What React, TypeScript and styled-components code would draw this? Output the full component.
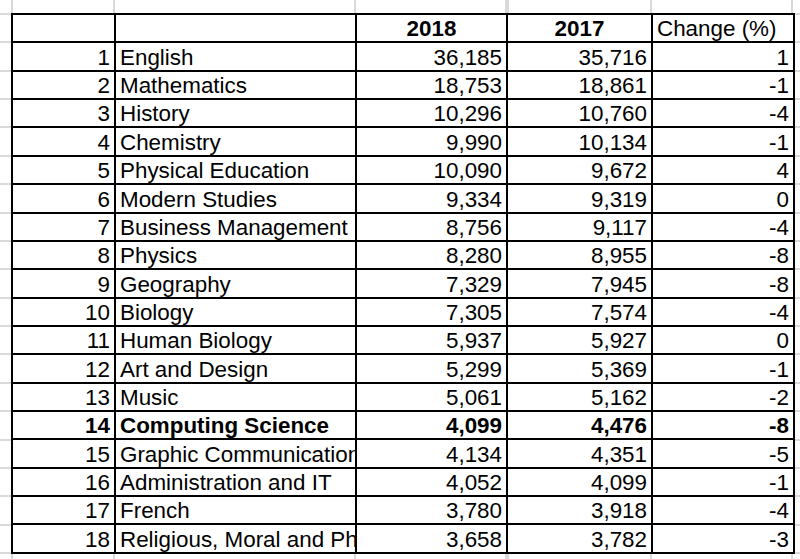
import styled, { createGlobalStyle } from "styled-components";

interface Subject {
  rank: number;
  name: string;
  y2018: string;
  y2017: string;
  change: string;
  highlight?: boolean;
}

const subjects: Subject[] = [
  { rank: 1, name: "English", y2018: "36,185", y2017: "35,716", change: "1" },
  { rank: 2, name: "Mathematics", y2018: "18,753", y2017: "18,861", change: "-1" },
  { rank: 3, name: "History", y2018: "10,296", y2017: "10,760", change: "-4" },
  { rank: 4, name: "Chemistry", y2018: "9,990", y2017: "10,134", change: "-1" },
  { rank: 5, name: "Physical Education", y2018: "10,090", y2017: "9,672", change: "4" },
  { rank: 6, name: "Modern Studies", y2018: "9,334", y2017: "9,319", change: "0" },
  { rank: 7, name: "Business Management", y2018: "8,756", y2017: "9,117", change: "-4" },
  { rank: 8, name: "Physics", y2018: "8,280", y2017: "8,955", change: "-8" },
  { rank: 9, name: "Geography", y2018: "7,329", y2017: "7,945", change: "-8" },
  { rank: 10, name: "Biology", y2018: "7,305", y2017: "7,574", change: "-4" },
  { rank: 11, name: "Human Biology", y2018: "5,937", y2017: "5,927", change: "0" },
  { rank: 12, name: "Art and Design", y2018: "5,299", y2017: "5,369", change: "-1" },
  { rank: 13, name: "Music", y2018: "5,061", y2017: "5,162", change: "-2" },
  { rank: 14, name: "Computing Science", y2018: "4,099", y2017: "4,476", change: "-8", highlight: true },
  { rank: 15, name: "Graphic Communication", y2018: "4,134", y2017: "4,351", change: "-5" },
  { rank: 16, name: "Administration and IT", y2018: "4,052", y2017: "4,099", change: "-1" },
  { rank: 17, name: "French", y2018: "3,780", y2017: "3,918", change: "-4" },
  { rank: 18, name: "Religious, Moral and Philosophical Studies", y2018: "3,658", y2017: "3,782", change: "-3" },
];

const GlobalStyle = createGlobalStyle`
  html, body {
    margin: 0;
    padding: 0;
    background: #fff;
  }
`;

const grid = "#d9d9d9";

// spreadsheet gridlines peeking out around the bordered table
const Sheet = styled.div`
  width: 800px;
  height: 559px;
  overflow: hidden;
  padding: 13px 0 0 11px;
  box-sizing: border-box;
  background:
    repeating-linear-gradient(
      to bottom,
      transparent 0 13px,
      ${grid} 13px 15px,
      transparent 15px 28.37px
    ),
    linear-gradient(
      to right,
      transparent 0 11px,
      ${grid} 11px 13px,
      transparent 13px 113px,
      ${grid} 113px 115px,
      transparent 115px 354px,
      ${grid} 354px 356px,
      transparent 356px 505px,
      ${grid} 505px 509px,
      transparent 509px 650px,
      ${grid} 650px 652px,
      transparent 652px 791px,
      ${grid} 791px 793px,
      transparent 793px
    );
  background-color: #fff;
  font-family: "Liberation Sans", Arial, sans-serif;
  font-size: 22.4px;
  color: #000;
`;

const Table = styled.table`
  border-collapse: collapse;
  table-layout: fixed;
  width: 782px;
  background: #fff;
`;

const Row = styled.tr<{ $bold?: boolean }>`
  height: 28.37px;
  font-weight: ${(p) => (p.$bold ? 700 : 400)};
`;

const Cell = styled.td<{ $align?: "left" | "right" | "center"; $bold?: boolean }>`
  border: 2px solid #000;
  padding: 0 4px 0 4px;
  line-height: 25px;
  vertical-align: bottom;
  text-align: ${(p) => p.$align ?? "right"};
  font-weight: ${(p) => (p.$bold ? 700 : "inherit")};
  white-space: nowrap;
  overflow: hidden;
  text-overflow: clip;
`;

function App() {
  return (
    <>
      <GlobalStyle />
      <Sheet>
        <Table>
          <colgroup>
            <col style={{ width: 103 }} />
            <col style={{ width: 241 }} />
            <col style={{ width: 151 }} />
            <col style={{ width: 145 }} />
            <col style={{ width: 142 }} />
          </colgroup>
          <tbody>
            <Row>
              <Cell />
              <Cell />
              <Cell $align="center" $bold>
                2018
              </Cell>
              <Cell $align="center" $bold>
                2017
              </Cell>
              <Cell $align="left">Change (%)</Cell>
            </Row>
            {subjects.map((s) => (
              <Row key={s.rank} $bold={s.highlight}>
                <Cell>{s.rank}</Cell>
                <Cell $align="left">{s.name}</Cell>
                <Cell>{s.y2018}</Cell>
                <Cell>{s.y2017}</Cell>
                <Cell>{s.change}</Cell>
              </Row>
            ))}
          </tbody>
        </Table>
      </Sheet>
    </>
  );
}

export default App;
